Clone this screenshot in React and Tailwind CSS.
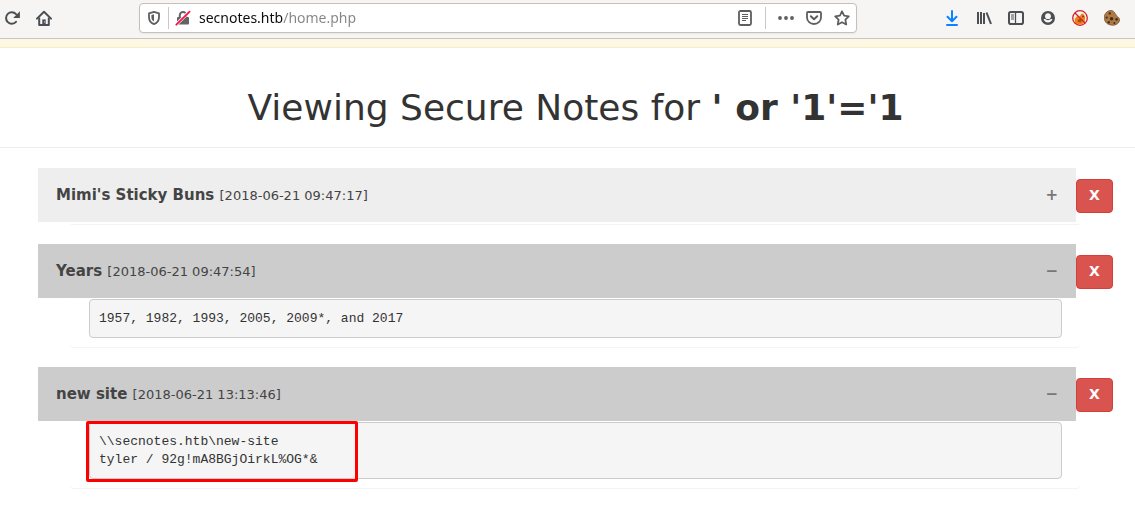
import React, { useState } from "react";

const initialNotes = [
  {
    id: 1,
    title: "Mimi's Sticky Buns",
    date: "2018-06-21 09:47:17",
    body: "Ingredients",
    open: false
  },
  {
    id: 2,
    title: "Years",
    date: "2018-06-21 09:47:54",
    body: "1957, 1982, 1993, 2005, 2009*, and 2017",
    open: true
  },
  {
    id: 3,
    title: "new site",
    date: "2018-06-21 13:13:46",
    body: "\\\\secnotes.htb\\new-site\ntyler / 92g!mA8BGjOirkL%OG*&",
    open: true,
    marked: true
  }
];

function Icon({ children }) {
  return (
    <svg className="w-4 h-4" viewBox="0 0 16 16" fill="none" aria-hidden="true">
      {children}
    </svg>
  );
}

function IconButton({ label, className = "text-[#4a4f54]", children }) {
  return (
    <button type="button" aria-label={label} className={`shrink-0 ${className}`}>
      <Icon>{children}</Icon>
    </button>
  );
}

function Toolbar() {
  const [url, setUrl] = useState("secnotes.htb/home.php");

  return (
    <header className="flex items-start bg-[#f6f5f4] border-b border-[#c9c5c1] pl-1 pr-[15px] pt-[3px] pb-[5px]">
      <div className="flex items-center gap-4 h-[30px]">
        <IconButton label="Reload">
          <path d="M12 11.8A5.7 5.7 0 1 1 12 4.2" stroke="currentColor" strokeWidth="2" strokeLinecap="round" />
          <path d="M15.9 1.2v6.7H9.2z" fill="currentColor" />
        </IconButton>
        <IconButton label="Home">
          <path d="M1 8.6 8 1.7l7 6.9" stroke="currentColor" strokeWidth="2" strokeLinecap="round" strokeLinejoin="round" />
          <path d="M3.2 7.5v7.4h9.6V7.5" stroke="currentColor" strokeWidth="2" strokeLinejoin="round" />
          <path d="M6.3 15V9.4h3.4V15z" fill="currentColor" />
          <path d="M8 11.4h.9v1.2H8z" fill="#f6f5f4" />
        </IconButton>
      </div>

      <div className="flex flex-1 items-center h-[30px] mx-[87px] px-1.5 bg-white border border-[#c4c0bc] rounded shadow-xs">
        <IconButton label="Tracking protection" className="text-[#5e5e5e]">
          <path d="M8 1.9 13 3.4v3.8c0 3.4-1.9 5.7-5 6.9-3.1-1.2-5-3.5-5-6.9V3.4z" stroke="currentColor" strokeWidth="1.8" strokeLinejoin="round" />
          <path d="M8 4.3v7.3C6.2 10.6 5.4 9.2 5.4 7.2V5z" fill="currentColor" />
        </IconButton>
        <span className="w-px h-[22px] bg-[#c8c8c8] mx-1.5"></span>
        <IconButton label="Connection not secure" className="text-[#636363]">
          <path d="M4.8 7V5.2a3.2 3.2 0 0 1 6.4 0V7" stroke="currentColor" strokeWidth="2" />
          <rect x="2" y="7" width="12" height="7.6" rx="1" fill="currentColor" />
          <path d="M.8 14.9 14.6 1.4" stroke="#fff" strokeWidth="3.2" />
          <path d="M1.3 14.7 14.6 1.6" stroke="#f5124a" strokeWidth="1.8" strokeLinecap="round" />
        </IconButton>
        <input
          type="text"
          aria-label="Address"
          value={url}
          onChange={(e) => setUrl(e.target.value)}
          className="flex-1 min-w-0 ml-2 outline-none text-sm font-['Noto_Sans',sans-serif] text-transparent caret-black bg-clip-text bg-linear-to-r from-[#0c0c0d] from-[84px] to-[#858585] to-[84px]"
        />
        <div className="flex items-center">
          <IconButton label="Reader view" className="text-[#5e5e5e]">
            <rect x="2" y="1" width="12" height="14" rx="1.5" stroke="currentColor" strokeWidth="1.8" />
            <path d="M5 4.5h6M5 6.5h6M5 8.5h6M5 10.5h4" stroke="currentColor" />
          </IconButton>
          <span className="w-px h-[22px] bg-[#c8c8c8] mx-3"></span>
          <div className="flex items-center gap-3">
            <IconButton label="Page actions" className="text-[#5e5e5e]">
              <circle cx="2" cy="8" r="1.9" fill="currentColor" />
              <circle cx="8" cy="8" r="1.9" fill="currentColor" />
              <circle cx="14" cy="8" r="1.9" fill="currentColor" />
            </IconButton>
            <IconButton label="Save to Pocket" className="text-[#5e5e5e]">
              <path d="M2 2h12a1 1 0 0 1 1 1v4.5a7 6.5 0 0 1-14 0V3a1 1 0 0 1 1-1z" stroke="currentColor" strokeWidth="1.8" />
              <path d="m4.8 6.3 3.2 3 3.2-3" stroke="currentColor" strokeWidth="2" strokeLinecap="round" strokeLinejoin="round" />
            </IconButton>
            <IconButton label="Bookmark" className="text-[#5e5e5e]">
              <path d="m8 1.3 2.1 4.3 4.7.7-3.4 3.4.8 4.8L8 12.2l-4.2 2.3.8-4.8L1.2 6.3l4.7-.7z" stroke="currentColor" strokeWidth="1.8" strokeLinejoin="round" />
            </IconButton>
          </div>
        </div>
      </div>

      <div className="flex items-center gap-4 h-[30px]">
        <IconButton label="Downloads" className="text-[#0a84ff]">
          <path d="M8 1v9.5M3.5 6.7 8 11.2l4.5-4.500M3 15h10" stroke="currentColor" strokeWidth="2" strokeLinecap="round" strokeLinejoin="round" />
        </IconButton>
        <IconButton label="Library">
          <path d="M2 2v12M5 2v12M8 3v11" stroke="currentColor" strokeWidth="2" />
          <path d="M10.5 2.500 15 14" stroke="currentColor" strokeWidth="2" />
        </IconButton>
        <IconButton label="Sidebars">
          <rect x="1" y="2" width="14" height="12" rx="1.8" stroke="currentColor" strokeWidth="2" />
          <path d="M7.5 2v12" stroke="currentColor" strokeWidth="1.3" />
          <path d="M3 5h3M3 7h3M3 9h3" stroke="currentColor" />
        </IconButton>
        <IconButton label="Account">
          <circle cx="8" cy="8" r="7" fill="currentColor" />
          <circle cx="8" cy="6.2" r="2.9" fill="#f6f5f4" />
          <path d="M3.6 9h1.6c1.600 1.500 4 1.500 5.600 0h1.600c-.5 2.200-2.200 3.500-4.400 3.500S4.100 11.200 3.600 9z" fill="#f6f5f4" />
        </IconButton>
        <IconButton label="Proxy off">
          <path d="M3 13.5 2.6 9l2.6-3 2.3.8 2-3.3 2 .6 1.7 2.6-.6 5.3-2.8 2.6H5.5z" fill="#ef8318" />
          <path d="m5.5 10 2.2-1.3 2.2 1.1-1 2.6-3-.3z" fill="#a94e12" />
          <circle cx="11" cy="6.5" r="1" fill="#8a3f13" />
          <circle cx="8" cy="8" r="7.3" stroke="#d3222a" strokeWidth="1.3" />
          <path d="m2.8 2.8 10.4 10.4" stroke="#d3222a" strokeWidth="1.3" />
        </IconButton>
        <IconButton label="Cookie editor">
          <path d="M5 .8c3-1 5.4.5 6.2 3.2 1.3.7 1.5 1.6 1.6 2.5 1.6.6 2.7 1.5 2.9 3.2-.4 3.5-3.8 5.8-7.5 5.5C3.5 14.9.3 12 .2 7.7.2 4.5 2 1.8 5 .8z" fill="#b07a42" stroke="#6b4a2c" strokeWidth=".7" />
          <circle cx="5.8" cy="3.4" r="1.2" fill="#3d3029" />
          <circle cx="2.7" cy="7.6" r="1.1" fill="#3d3029" />
          <circle cx="7.6" cy="8.8" r="1.8" fill="#3d3029" />
          <circle cx="4.8" cy="12.2" r="1.2" fill="#3d3029" />
          <circle cx="12.6" cy="9.4" r="1.3" fill="#3d3029" />
          <circle cx="10.4" cy="13" r="1" fill="#3d3029" />
        </IconButton>
      </div>
    </header>
  );
}

function Note({ note, onToggle, onDelete }) {
  return (
    <section className="mb-5">
      <div className="flex items-center pl-[38px] pr-[22px]">
        <button
          type="button"
          aria-expanded={note.open}
          onClick={onToggle}
          className={`flex flex-1 items-center justify-between h-[54px] px-[18px] text-left text-[#444] ${
            note.open ? "bg-[#ccc]" : "bg-[#eee]"
          }`}
        >
          <span className="text-[13px]">
            <b className="text-[15px]">{note.title} </b>[{note.date}]
          </span>
          <span className="text-[15px] font-bold text-[#777]">{note.open ? "\u2212" : "+"}</span>
        </button>
        <button
          type="button"
          onClick={onDelete}
          className="w-[37px] h-[34px] mt-0.5 pb-0.5 rounded border border-[#d43f3a] bg-[#d9534f] text-white text-sm font-bold"
        >
          X
        </button>
      </div>

      {/* Note body */}
      <div className="ml-[70px] mr-[55px] pl-[19px] pr-[18px] pt-px pb-px rounded-b shadow-[0_1px_1px_rgba(0,0,0,0.05)]">
        {note.open && (
          <div className="relative mb-2">
            <pre className="px-[9px] pt-[10px] pb-[9px] rounded border border-[#ccc] bg-[#f5f5f5] text-[#333] text-[13px] leading-[18px] font-['Liberation_Mono',monospace]">
              {note.body}
            </pre>
            {note.marked && (
              <div className="absolute -top-px -bottom-[3px] -left-[3px] w-[272px] border-3 border-[#f00] rounded-xs"></div>
            )}
          </div>
        )}
      </div>
    </section>
  );
}

function App() {
  const [notes, setNotes] = useState(initialNotes);

  const toggleNote = (id) => {
    setNotes(prev => prev.map(n => (n.id === id ? { ...n, open: !n.open } : n)));
  };

  const deleteNote = (id) => {
    setNotes(prev => prev.filter(n => n.id !== id));
  };

  return (
    <div className="bg-white font-['DejaVu_Sans',sans-serif]">
      <Toolbar />
      {/* Bottom edge of the warning banner */}
      <div className="h-[9px] bg-[#fcf8e3] border-b border-[#faebcc]"></div>

      <main>
        <h1 className="pt-10 pb-[19px] pl-4 mb-5 border-b border-[#eee] text-center text-4xl text-[#333]">
          Viewing Secure Notes for <b>' or '1'='1</b>
        </h1>

        {notes.map(note => (
          <Note
            key={note.id}
            note={note}
            onToggle={() => toggleNote(note.id)}
            onDelete={() => deleteNote(note.id)}
          />
        ))}
      </main>
    </div>
  );
}

export default App;
